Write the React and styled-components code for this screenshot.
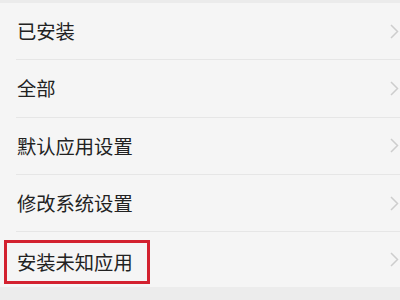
import React from "react";
import styled, { createGlobalStyle } from "styled-components";

const GlobalStyle = createGlobalStyle`
  html, body {
    margin: 0;
    padding: 0;
    background: #f5f5f5;
    font-family: "Noto Sans CJK SC", "Noto Sans", sans-serif;
  }
`;

const Page = styled.div`
  width: 400px;
  height: 300px;
  overflow: hidden;
  display: flex;
  flex-direction: column;
  background: #f5f5f5;
`;

const TopBand = styled.div`
  height: 3px;
  background: #ebebeb;
`;

const List = styled.div`
  display: flex;
  flex-direction: column;
`;

const Row = styled.div`
  display: flex;
  align-items: center;
  justify-content: space-between;
  margin-left: 16px;
  padding-left: 1px;
  border-bottom: ${(p) => (p.last ? "none" : "1px solid #e6e6e6")};
  box-sizing: border-box;
  height: ${(p) => (p.last ? "55px" : "57.3px")};
`;

const Label = styled.div`
  font-size: 19.3px;
  color: #222;
  display: flex;
  align-items: center;
  box-sizing: border-box;
  ${(p) =>
    p.highlighted &&
    `
    margin-left: -13px;
    padding-left: 10px;
    width: 146px;
    height: 44px;
    border: 3px solid #d3212f;
    margin-top: 4px;
  `}
`;

const Chevron = styled.svg`
  width: 9px;
  height: 15px;
  margin-right: 1px;
  flex-shrink: 0;
`;

const BottomBand = styled.div`
  flex: 1;
  background: #ececec;
`;

const items = ["已安装", "全部", "默认应用设置", "修改系统设置", "安装未知应用"];

export default function App() {
  return (
    <Page>
      <GlobalStyle />
      <TopBand />
      <List>
        {items.map((text, i) => (
          <Row key={text} last={i === items.length - 1}>
            <Label highlighted={i === items.length - 1}>{text}</Label>
            <Chevron viewBox="0 0 9 15">
              <path d="M1 1 L7.5 7.5 L1 14" fill="none" stroke="#cdcdcd" strokeWidth="1.5" />
            </Chevron>
          </Row>
        ))}
      </List>
      <BottomBand />
    </Page>
  );
}
